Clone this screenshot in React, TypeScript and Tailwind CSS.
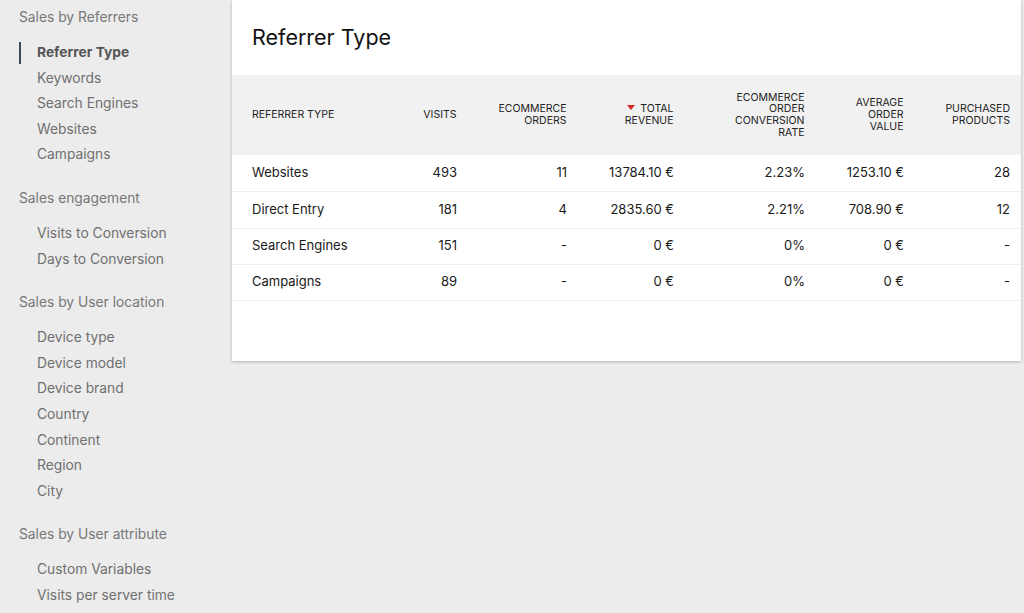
import React from "react";

const groups = [
  { title: "Sales by Referrers", items: ["Referrer Type", "Keywords", "Search Engines", "Websites", "Campaigns"] },
  { title: "Sales engagement", items: ["Visits to Conversion", "Days to Conversion"] },
  { title: "Sales by User location", items: ["Device type", "Device model", "Device brand", "Country", "Continent", "Region", "City"] },
  { title: "Sales by User attribute", items: ["Custom Variables", "Visits per server time"] },
];

const rows = [
  { h: "h-[36px]", c: ["Websites", "493", "11", "13784.10 €", "2.23%", "1253.10 €", "28"] },
  { h: "h-[37px]", c: ["Direct Entry", "181", "4", "2835.60 €", "2.21%", "708.90 €", "12"] },
  { h: "h-[36px]", c: ["Search Engines", "151", "-", "0 €", "0%", "0 €", "-"] },
  { h: "h-[36px]", c: ["Campaigns", "89", "-", "0 €", "0%", "0 €", "-"] },
];

const widths = [144, 93, 110, 106, 132, 98, 106];

export default function App() {
  return (
    <div
      className="flex h-[613px] w-[1024px] overflow-hidden bg-[#ececec]"
      style={{ fontFamily: "Inter, 'Helvetica Neue', Arial, sans-serif" }}
    >
      <aside className="w-[232px] shrink-0 pl-[19px] pt-[7px]">
        {groups.map((g, gi) => (
          <div key={g.title} className={gi > 0 ? "mt-[20px]" : ""}>
            <div className="h-[20px] text-[13.8px] leading-[20px] text-[#777]">{g.title}</div>
            <div className="mt-[13px]">
              {g.items.map((it) => {
                const active = it === "Referrer Type" && gi === 0;
                return (
                  <div key={it} className="relative h-[25.6px] pl-[18px] text-[13.8px] leading-[25.6px]">
                    {active && <span className="absolute left-0 top-[2px] h-[22px] w-[2px] bg-[#3d4a53]" />}
                    <span className={active ? "font-bold text-[#555]" : "text-[#707070]"}>{it}</span>
                  </div>
                );
              })}
            </div>
          </div>
        ))}
      </aside>
      <main className="w-[789px] shrink-0">
        <div className="bg-white pb-[60px] shadow-[0_1px_3px_rgba(0,0,0,0.25)]">
          <div className="flex h-[75px] items-center pl-[20px] text-[21.5px] text-[#111]">Referrer Type</div>
          <table className="w-full table-fixed border-collapse">
            <colgroup>
              {widths.map((w, i) => (
                <col key={i} style={{ width: w }} />
              ))}
            </colgroup>
            <thead>
              <tr className="h-[80px] bg-[#f1f1f1]">
                <th className="pl-[20px] text-left align-middle text-[10.5px] font-normal leading-[11.7px] text-[#222]">REFERRER TYPE</th>
                <th className="border-l border-[#f4f4f4] pr-[12px] text-right text-[10.5px] font-normal leading-[11.7px] text-[#222]">VISITS</th>
                <th className="border-l border-[#f4f4f4] pr-[12px] text-right text-[10.5px] font-normal leading-[11.7px] text-[#222]">ECOMMERCE<br />ORDERS</th>
                <th className="border-l border-[#f4f4f4] pr-[11px] text-right text-[10.5px] font-normal leading-[11.7px] text-[#222]">
                  <span className="mr-[5px] inline-block h-0 w-0 border-x-[4px] border-t-[5px] border-x-transparent border-t-[#d4291f] align-[2px]" />
                  TOTAL<br />REVENUE
                </th>
                <th className="border-l border-[#f4f4f4] pr-[12px] text-right text-[10.5px] font-normal leading-[11.7px] text-[#222]">ECOMMERCE<br />ORDER<br />CONVERSION<br />RATE</th>
                <th className="border-l border-[#f4f4f4] pr-[11px] text-right text-[10.5px] font-normal leading-[11.7px] text-[#222]">AVERAGE<br />ORDER<br />VALUE</th>
                <th className="border-l border-[#f4f4f4] pr-[11px] text-right text-[10.5px] font-normal leading-[11.7px] text-[#222]">PURCHASED<br />PRODUCTS</th>
              </tr>
            </thead>
            <tbody>
              {rows.map((r) => (
                <tr key={r.c[0]} className={`${r.h} border-b border-[#eeeeee] text-[13px] text-[#1a1a1a]`}>
                  {r.c.map((c, i) => (
                    <td
                      key={i}
                      className={
                        i === 0
                          ? "pl-[20px] text-left"
                          : i === 3 || i === 5 || i === 6
                          ? "pr-[11px] text-right"
                          : "pr-[12px] text-right"
                      }
                    >
                      {c}
                    </td>
                  ))}
                </tr>
              ))}
            </tbody>
          </table>
        </div>
      </main>
    </div>
  );
}
